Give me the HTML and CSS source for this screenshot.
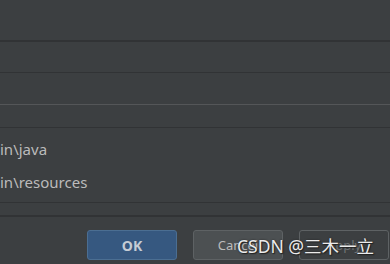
FILE: index.html
```html
<!DOCTYPE html>
<html>
<head>
<meta charset="utf-8">
<link rel="stylesheet" href="styles.css">
</head>
<body>
<div class="dialog">
  <div class="row r1"></div>
  <div class="row r2"></div>
  <div class="row r3"></div>
  <div class="row r4"></div>
  <div class="list">
    <div class="item">in\java</div>
    <div class="item">in\resources</div>
  </div>
  <div class="row r5"></div>
  <div class="footer">
    <button class="btn ok">OK</button>
    <button class="btn cancel">Cancel</button>
    <button class="btn apply">Apply</button>
    <span class="watermark">CSDN @三木一立</span>
  </div>
</div>
</body>
</html>
```
FILE: styles.css
```css
html, body {
  margin: 0;
  padding: 0;
  background: #3c3f41;
}
.dialog {
  width: 390px;
  height: 264px;
  overflow: hidden;
  position: relative;
  font-family: "Noto Sans", "Open Sans", sans-serif;
  color: #bbbbbb;
}
.row { box-sizing: border-box; }
.r1 { height: 42px; border-bottom: 2px solid #313335; }
.r2 { height: 31px; border-bottom: 1px solid #313335; }
.r3 { height: 32px; border-bottom: 1px solid #545658; }
.r4 { height: 23px; border-bottom: 1px solid #313335; }
.list {
  box-sizing: border-box;
  height: 75px;
  border-bottom: 1px solid #313335;
  padding-top: 8px;
}
.item {
  height: 33px;
  line-height: 26px;
  font-size: 15px;
  padding-left: 0;
  white-space: nowrap;
}
.r5 { height: 14px; border-bottom: 2px solid #313335; }
.footer {
  display: flex;
  gap: 16px;
  padding: 13px 0 0 87px;
  position: relative;
}
.btn {
  box-sizing: border-box;
  width: 90px;
  height: 30px;
  border-radius: 3px;
  font-family: "Noto Sans", "Open Sans", sans-serif;
  font-size: 13px;
  padding: 0;
  margin: 0;
}
.ok {
  background: #365880;
  border: 1px solid #4b6e92;
  color: #c5ccd4;
  font-weight: bold;
  font-size: 14px;
}
.cancel {
  background: #4c5052;
  border: 1px solid #5e6264;
  color: #bbbbbb;
}
.apply {
  background: #3c3f41;
  border: 1px solid #5e6264;
  color: #6f7375;
}
.watermark {
  position: absolute;
  left: 237px;
  top: 16px;
  font-size: 17.5px;
  color: #ececec;
  white-space: nowrap;
  text-shadow: 0 0 2px #222, 1px 1px 1px #222;
  font-family: "Noto Sans", "Noto Sans CJK SC", sans-serif;
}
```
